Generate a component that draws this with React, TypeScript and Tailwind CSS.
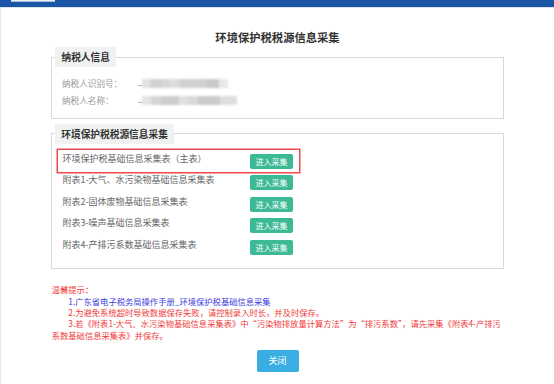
import React from "react";

const rows = [
  "环境保护税基础信息采集表（主表）",
  "附表1-大气、水污染物基础信息采集表",
  "附表2-固体废物基础信息采集表",
  "附表3-噪声基础信息采集表",
  "附表4-产排污系数基础信息采集表",
];

function Blur({ segs }: { segs: [number, string][] }) {
  return (
    <div className="relative flex items-center h-[16.7px]">
      <span className="absolute left-[-4px] top-[10px] w-[7px] h-[1px] bg-[#b8b8b8]" />
      <div className="flex h-[9px] blur-[0.8px]">
        {segs.map(([w, c], i) => (
          <span key={i} className="h-full" style={{ width: w, background: c }} />
        ))}
      </div>
    </div>
  );
}

export default function App() {
  return (
    <div className="w-[554px] h-[384px] bg-white overflow-hidden font-['Noto_Sans_CJK_SC','Microsoft_YaHei',sans-serif]">
      <div className="h-[7px] bg-[#1b55a5]">
        <div className="ml-[11px] w-[44px] h-[2px] bg-[#e9eef6] border-b border-[#a9bddc]" />
      </div>
      <div className="h-px bg-[#dfe5ee]" />
      <div className="h-[376px] border-l border-[#e6e6e6]">
        <h1 className="pt-[22px] text-center text-[11.3px] leading-[14px] font-bold text-[#333]">
          环境保护税税源信息采集
        </h1>

        <fieldset className="mt-[3.3px] ml-[50px] w-[453px] border border-[#d9d9d9] pl-[3px] pr-0 pb-[9.9px]">
          <legend className="h-[20px] px-[6.5px] bg-[#f0f2f2] text-[9.7px] leading-[20px] font-bold text-[#333]">
            纳税人信息
          </legend>
          <div className="pt-[7.7px] pl-[7px]">
            <div className="flex items-center h-[16.7px]">
              <span className="w-[80px] text-[8.6px] leading-[12px] text-[#9a9a9a]">纳税人识别号：</span>
              <Blur
                segs={[
                  [8, "#e2e2e2"],
                  [12, "#d2d2d2"],
                  [8, "#d8d8d8"],
                  [10, "#dcdcdc"],
                  [27, "#d0d0d0"],
                  [12, "#c9c9c9"],
                  [9, "#e8e8e8"],
                ]}
              />
            </div>
            <div className="flex items-center h-[16.7px]">
              <span className="w-[80px] text-[8.6px] leading-[12px] text-[#9a9a9a]">纳税人名称：</span>
              <Blur
                segs={[
                  [9, "#e4e4e4"],
                  [10, "#d6d6d6"],
                  [18, "#cdcdcd"],
                  [9, "#e0e0e0"],
                  [10, "#d8d8d8"],
                  [22, "#cbcbcb"],
                  [17, "#dedede"],
                ]}
              />
            </div>
          </div>
        </fieldset>

        <fieldset className="mt-[4.7px] ml-[50px] w-[453px] border border-[#d9d9d9] pl-[3px] pr-0 pb-[9.7px]">
          <legend className="h-[20px] px-[6.3px] bg-[#f0f2f2] text-[9.7px] leading-[20px] font-bold text-[#333]">
            环境保护税税源信息采集
          </legend>
          <div className="pt-[6.5px] ml-[3px] w-[240.5px]">
            {rows.map((r, i) => (
              <div
                key={r}
                className={
                  "flex items-center justify-between h-[21.5px] pl-[4.5px] pr-[5.5px] " +
                  (i === 0 ? "shadow-[0_0_0_1.5px_#f04848]" : "")
                }
              >
                <span className="text-[9px] leading-[14px] mb-[5px] text-[#666]">{r}</span>
                <button className="w-[43px] h-[15px] bg-[#3cb995] text-white text-[8px] leading-[15px] rounded-[2px] text-center">
                  进入采集
                </button>
              </div>
            ))}
          </div>
        </fieldset>

        <div className="mt-[15.7px] ml-[50.7px] w-[453px] text-[8.3px] leading-[11.3px] text-[#f03a3a]">
          <div>温馨提示：</div>
          <div className="indent-[16.6px] text-[#3a3ae0]">1.广东省电子税务局操作手册_环境保护税基础信息采集</div>
          <div className="indent-[16.6px]">2.为避免系统超时导致数据保存失败，请控制录入时长，并及时保存。</div>
          <div className="indent-[16.6px]">
            3.若《附表1-大气、水污染物基础信息采集表》中“污染物排放量计算方法”为“排污系数”，请先采集《附表4-产排污系数基础信息采集表》并保存。
          </div>
        </div>

        <div className="mt-[9.1px] flex justify-center">
          <button className="w-[42px] h-[22px] bg-[#3aaee2] text-white text-[9px] leading-[22px] rounded-[2px]">
            关闭
          </button>
        </div>
      </div>
    </div>
  );
}
